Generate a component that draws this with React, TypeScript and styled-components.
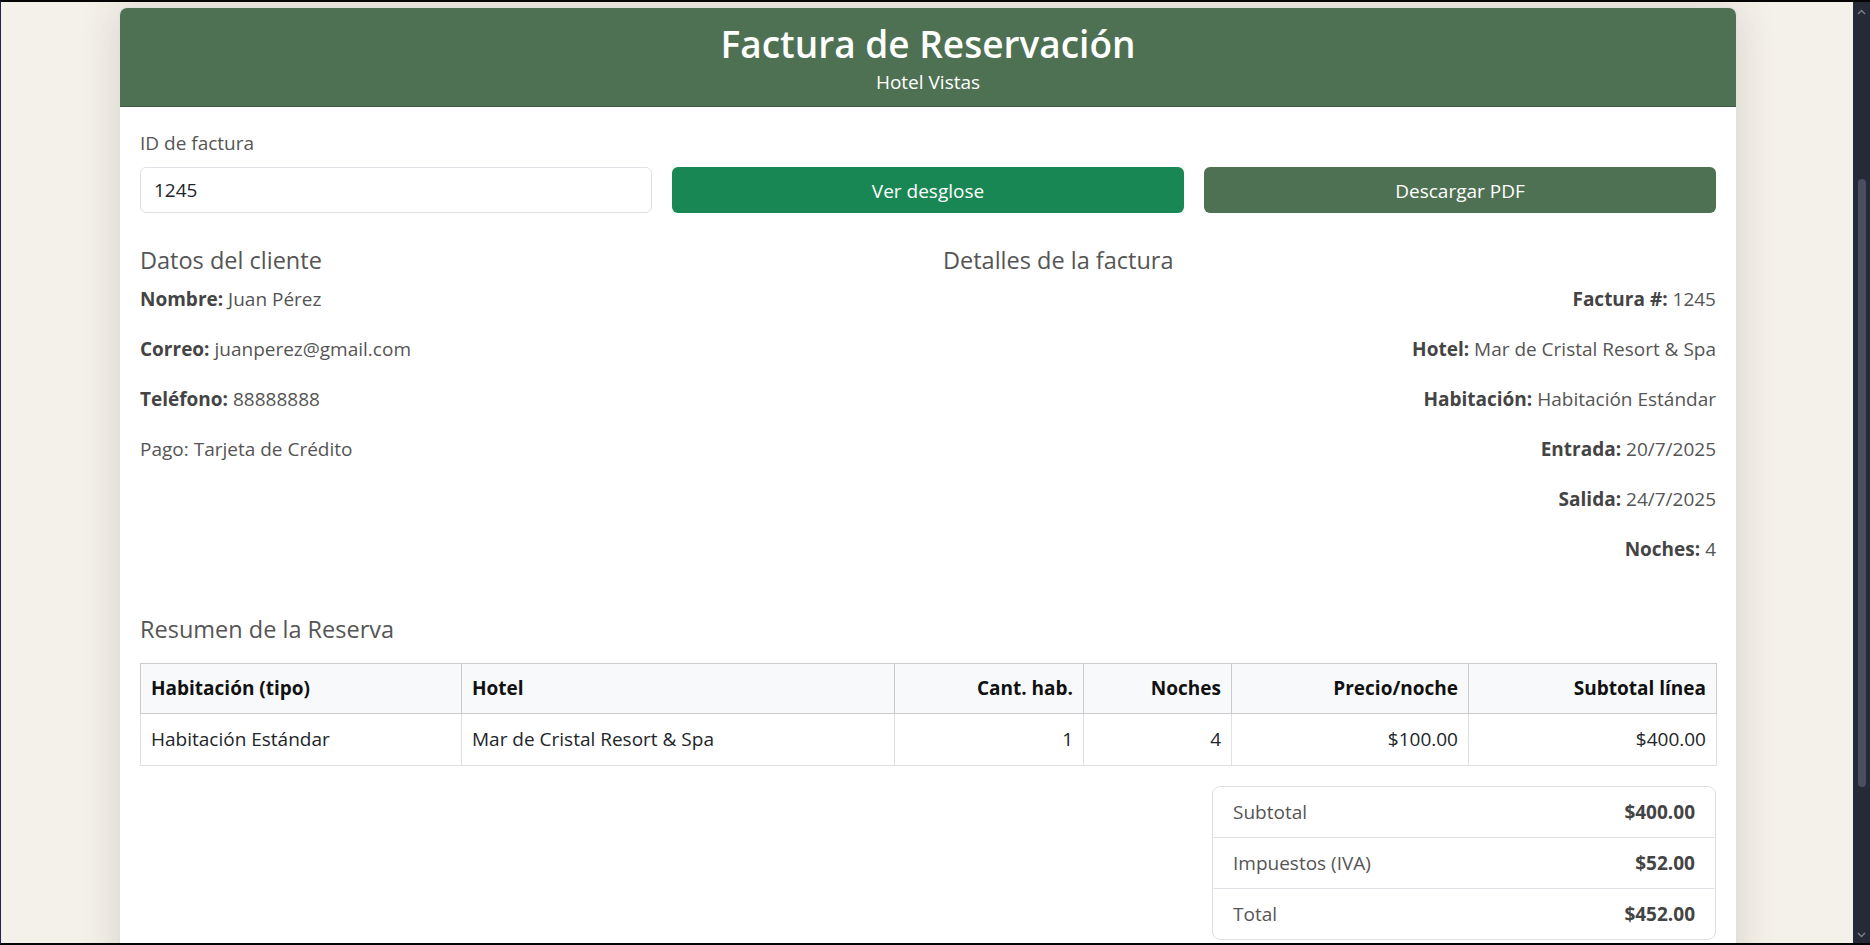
import React from "react";
import styled, { createGlobalStyle } from "styled-components";

const GlobalStyle = createGlobalStyle`
  *, *::before, *::after { box-sizing: border-box; }
  html, body { margin: 0; padding: 0; height: 100%; overflow: hidden; }
  body { font-family: "Open Sans", "Segoe UI", "Liberation Sans", sans-serif; background: #050505; }
  #root { height: 100%; }
`;

const Frame = styled.div`
  height: 945px;
  display: flex;
  border-top: 2px solid #050505;
  border-bottom: 2px solid #050505;
  border-left: 1px solid #23234d;
`;

const Viewport = styled.main`
  flex: 1;
  overflow: hidden;
  padding: 5px 0 0 2px;
  background: #f4f1ea;
`;

const ScrollTrack = styled.div`
  width: 17px;
  background: #252a36;
  display: flex;
  flex-direction: column;
  align-items: center;
  padding: 7px 0 5px;
`;

const ArrowIcon = styled.svg`
  width: 9px;
  height: 6px;
  display: block;
  flex: none;
`;

const Thumb = styled.div`
  width: 8px;
  height: 608px;
  margin-top: 164px;
  border-radius: 4px;
  background: #4a4e63;
`;

const Spacer = styled.div`
  flex: 1;
`;

const Card = styled.section`
  width: 1618px;
  margin: 0 auto;
  background: #fff;
  border: 1px solid rgba(0, 0, 0, 0.12);
  border-radius: 8px;
  box-shadow: 0 0 40px rgba(60, 50, 30, 0.16);
  overflow: hidden;
`;

const Header = styled.header`
  background: #4f7153;
  color: #fff;
  text-align: center;
  padding: 13px 20px 10px;
  border-bottom: 1px solid #3e5b42;
`;

const Title = styled.h1`
  margin: 0;
  font-size: 37px;
  line-height: 46px;
  font-weight: 600;
`;

const Subtitle = styled.div`
  margin-top: 2px;
  font-size: 19px;
  line-height: 27px;
`;

const Body = styled.div`
  padding: 23px 20px 40px;
  color: #555;
`;

const FieldLabel = styled.label`
  display: block;
  font-size: 19px;
  line-height: 27px;
  margin-bottom: 10px;
  color: #555;
`;

const Controls = styled.div`
  display: grid;
  grid-template-columns: repeat(3, 1fr);
  gap: 20px;
`;

const TextInput = styled.input`
  height: 46px;
  width: 100%;
  border: 1px solid #dee2e6;
  border-radius: 6px;
  padding: 0 13px;
  font-family: inherit;
  font-size: 19px;
  color: #212529;
  outline: none;
`;

const ActionButton = styled.button<{ $tone: "success" | "forest" }>`
  height: 46px;
  border: none;
  border-radius: 6px;
  padding-top: 3px;
  font-family: inherit;
  font-size: 19px;
  color: #fff;
  background: ${(p) => (p.$tone === "success" ? "#198754" : "#4f7153")};
  cursor: pointer;
`;

const InfoGrid = styled.div`
  display: grid;
  grid-template-columns: 1fr 1fr;
  column-gap: 30px;
  margin-top: 34px;
`;

const SectionTitle = styled.h4`
  margin: 0 0 13px;
  font-size: 23.5px;
  line-height: 26px;
  font-weight: 400;
  color: #555;
`;

const InfoLine = styled.p<{ $align?: "left" | "right" }>`
  margin: 0 0 23px;
  font-size: 19px;
  line-height: 27px;
  color: #555;
  text-align: ${(p) => p.$align ?? "left"};
`;

const Key = styled.strong`
  color: #444;
  font-weight: 700;
`;

const Summary = styled.section`
  margin-top: 30px;
`;

const SummaryTitle = styled(SectionTitle)`
  margin-bottom: 21px;
`;

const Table = styled.table`
  width: 100%;
  border-collapse: collapse;
  table-layout: fixed;
  font-size: 19px;
  line-height: 27px;
  color: #212529;
`;

const Th = styled.th<{ $num?: boolean }>`
  background: #f8f9fa;
  border: 1px solid #c9cbcd;
  padding: 11px 10px;
  font-weight: 700;
  color: #111;
  text-align: ${(p) => (p.$num ? "right" : "left")};
`;

const Td = styled.td<{ $num?: boolean }>`
  border: 1px solid #dee2e6;
  padding: 12px 10px;
  text-align: ${(p) => (p.$num ? "right" : "left")};
`;

const TotalsWrap = styled.div`
  display: flex;
  justify-content: flex-end;
  margin-top: 20px;
`;

const Totals = styled.div`
  width: 504px;
  border: 1px solid #dee2e6;
  border-radius: 8px;
  overflow: hidden;
`;

const TotalRow = styled.div`
  display: flex;
  justify-content: space-between;
  padding: 12px 20px 11px;
  font-size: 19px;
  line-height: 27px;
  color: #555;
  & + & {
    border-top: 1px solid #dee2e6;
  }
`;

const TotalValue = styled.span`
  font-weight: 700;
  color: #444;
`;

const columns = [
  { label: "Habitación (tipo)", width: 321, num: false },
  { label: "Hotel", width: 433, num: false },
  { label: "Cant. hab.", width: 189, num: true },
  { label: "Noches", width: 148, num: true },
  { label: "Precio/noche", width: 237, num: true },
  { label: "Subtotal línea", width: 248, num: true },
];

const row = ["Habitación Estándar", "Mar de Cristal Resort & Spa", "1", "4", "$100.00", "$400.00"];

const details: [string, string][] = [
  ["Factura #:", "1245"],
  ["Hotel:", "Mar de Cristal Resort & Spa"],
  ["Habitación:", "Habitación Estándar"],
  ["Entrada:", "20/7/2025"],
  ["Salida:", "24/7/2025"],
  ["Noches:", "4"],
];

const totals: [string, string][] = [
  ["Subtotal", "$400.00"],
  ["Impuestos (IVA)", "$52.00"],
  ["Total", "$452.00"],
];

function Chevron({ up }: { up?: boolean }) {
  return (
    <ArrowIcon viewBox="0 0 9 6">
      <polyline
        points={up ? "1,5 4.5,1.5 8,5" : "1,1 4.5,4.5 8,1"}
        fill="none"
        stroke="#7c8090"
        strokeWidth="1.4"
      />
    </ArrowIcon>
  );
}

export default function App() {
  return (
    <>
      <GlobalStyle />
      <Frame>
        <Viewport>
          <Card>
            <Header>
              <Title>Factura de Reservación</Title>
              <Subtitle>Hotel Vistas</Subtitle>
            </Header>
            <Body>
              <FieldLabel htmlFor="invoice-id">ID de factura</FieldLabel>
              <Controls>
                <TextInput id="invoice-id" defaultValue="1245" />
                <ActionButton $tone="success">Ver desglose</ActionButton>
                <ActionButton $tone="forest">Descargar PDF</ActionButton>
              </Controls>

              <InfoGrid>
                <div>
                  <SectionTitle>Datos del cliente</SectionTitle>
                  <InfoLine>
                    <Key>Nombre:</Key> Juan Pérez
                  </InfoLine>
                  <InfoLine>
                    <Key>Correo:</Key> juanperez@gmail.com
                  </InfoLine>
                  <InfoLine>
                    <Key>Teléfono:</Key> 88888888
                  </InfoLine>
                  <InfoLine>Pago: Tarjeta de Crédito</InfoLine>
                </div>
                <div>
                  <SectionTitle>Detalles de la factura</SectionTitle>
                  {details.map(([k, v]) => (
                    <InfoLine key={k} $align="right">
                      <Key>{k}</Key> {v}
                    </InfoLine>
                  ))}
                </div>
              </InfoGrid>

              <Summary>
                <SummaryTitle>Resumen de la Reserva</SummaryTitle>
                <Table>
                  <colgroup>
                    {columns.map((c) => (
                      <col key={c.label} style={{ width: c.width }} />
                    ))}
                  </colgroup>
                  <thead>
                    <tr>
                      {columns.map((c) => (
                        <Th key={c.label} $num={c.num}>
                          {c.label}
                        </Th>
                      ))}
                    </tr>
                  </thead>
                  <tbody>
                    <tr>
                      {row.map((cell, i) => (
                        <Td key={i} $num={columns[i].num}>
                          {cell}
                        </Td>
                      ))}
                    </tr>
                  </tbody>
                </Table>
                <TotalsWrap>
                  <Totals>
                    {totals.map(([k, v]) => (
                      <TotalRow key={k}>
                        <span>{k}</span>
                        <TotalValue>{v}</TotalValue>
                      </TotalRow>
                    ))}
                  </Totals>
                </TotalsWrap>
              </Summary>
            </Body>
          </Card>
        </Viewport>
        <ScrollTrack>
          <Chevron up />
          <Thumb />
          <Spacer />
          <Chevron />
        </ScrollTrack>
      </Frame>
    </>
  );
}
